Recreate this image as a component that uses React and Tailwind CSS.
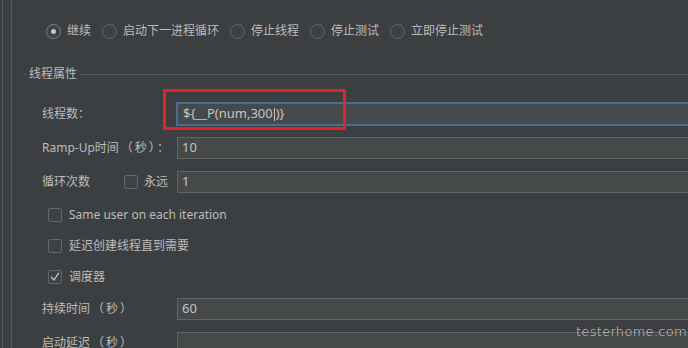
import React from 'react'

const font = { fontFamily: '"Noto Sans", "Noto Sans CJK SC", sans-serif' }

const Radio = ({ checked, label }) => (
  <label className="flex items-center gap-[6px] mr-[11px]">
    <span className={`w-[15px] h-[15px] rounded-full border flex items-center justify-center bg-[#3f4244] ${checked ? 'border-[#7d8083]' : 'border-[#64676a]'}`}>
      {checked && <span className="w-[5px] h-[5px] rounded-full bg-[#c4c4c4]" />}
    </span>
    <span className="text-[12px] leading-[16px]">{label}</span>
  </label>
)

const Checkbox = ({ checked }) => (
  <span className="w-[14px] h-[14px] rounded-[2px] border border-[#64676a] bg-[#3f4244] flex items-center justify-center shrink-0">
    {checked && (
      <svg width="10" height="10" viewBox="0 0 10 10" fill="none">
        <path d="M1.5 5.2 L4 8 L8.6 1.2" stroke="#c4c4c4" strokeWidth="1.3" strokeLinecap="round" strokeLinejoin="round" />
      </svg>
    )}
  </span>
)

const Field = ({ value, focused, className = '' }) => (
  <div
    className={`flex-1 mr-[-20px] flex items-center bg-[#45494a] text-[13px] text-[#c4c4c4] ${
      focused ? 'h-[24px] border-2 border-[#466d94] pl-[5px]' : 'h-[22px] border border-[#646464] pl-[4px]'
    } ${className}`}
  >
    {value}
  </div>
)

const CheckRow = ({ checked, label, className = '' }) => (
  <div className={`flex items-center gap-[7px] -ml-[18px] pl-[24px] h-[16px] ${className}`}>
    <Checkbox checked={checked} />
    <span className="text-[12px] leading-[16px]">{label}</span>
  </div>
)

// full-width parens drawn a little looser, like the Swing label
const Paren = ({ children }) => <span className="mx-[2px]">{children}</span>

export default function App() {
  return (
    <div style={font} className="relative w-[688px] h-[348px] overflow-hidden bg-[#3c3f41] text-[#bbbbbb] flex">
      <div className="w-[2px]" />
      <div className="w-[9px] border-l border-[#56595c]" />
      <div className="flex-1 border-l border-[#56595c] flex flex-col">
        {/* radio row */}
        <div className="flex items-center pl-[34px] mt-[23px] h-[16px]">
          <Radio checked label="继续" />
          <Radio label="启动下一进程循环" />
          <Radio label="停止线程" />
          <Radio label="停止测试" />
          <Radio label="立即停止测试" />
        </div>

        {/* fieldset */}
        <div className="ml-[12px] mt-[28px] flex flex-col">
          <div className="flex items-center h-[14px]">
            <div className="w-[3px] border-t border-[#56595c]" />
            <span className="px-[2px] text-[12px] leading-[14px]">线程属性</span>
            <div className="flex-1 border-t border-[#56595c]" />
          </div>

          <div className="flex flex-col pl-[18px]">
            <div className="relative flex items-center mt-[21px]">
              <span className="w-[134px] text-[12px]">线程数：</span>
              <Field focused value={<span>{'${__P(num,300'}<span className="inline-block w-[1px] h-[13px] bg-[#c4c4c4] align-middle mx-[1px]" />{')}'}</span>} />
              <div className="absolute left-[121px] top-[-13px] w-[183px] h-[41px] border-[3px] border-[#e0242c]" />
            </div>

            <div className="flex items-center mt-[11px]">
              <span className="w-[135px] text-[12px] whitespace-nowrap">Ramp-Up时间<Paren>（</Paren>秒<Paren>）</Paren>：</span>
              <Field value="10" />
            </div>

            <div className="flex items-center mt-[12px]">
              <span className="w-[82px] text-[12px]">循环次数</span>
              <div className="w-[53px] flex items-center gap-[6px]">
                <Checkbox />
                <span className="text-[12px]">永远</span>
              </div>
              <Field value="1" />
            </div>

            <CheckRow label="Same user on each iteration" className="mt-[14px]" />
            <CheckRow label="延迟创建线程直到需要" className="mt-[15px]" />
            <CheckRow checked label="调度器" className="mt-[15px]" />

            <div className="flex items-center mt-[13px]">
              <span className="w-[135px] text-[12px] whitespace-nowrap">持续时间<Paren>（</Paren>秒<Paren>）</Paren></span>
              <Field value="60" />
            </div>

            <div className="flex items-start mt-[12px]">
              <span className="w-[135px] text-[12px] mt-[2px] whitespace-nowrap">启动延迟<Paren>（</Paren>秒<Paren>）</Paren></span>
              <Field value="" className="h-[30px]" />
            </div>
          </div>
        </div>
      </div>

      <span className="absolute right-[1px] top-[322px] text-[13px] font-extralight text-[#d4d4d4] tracking-[0.3px]" style={{ fontFamily: '"DejaVu Sans", sans-serif' }}>
        testerhome.com
      </span>
    </div>
  )
}
